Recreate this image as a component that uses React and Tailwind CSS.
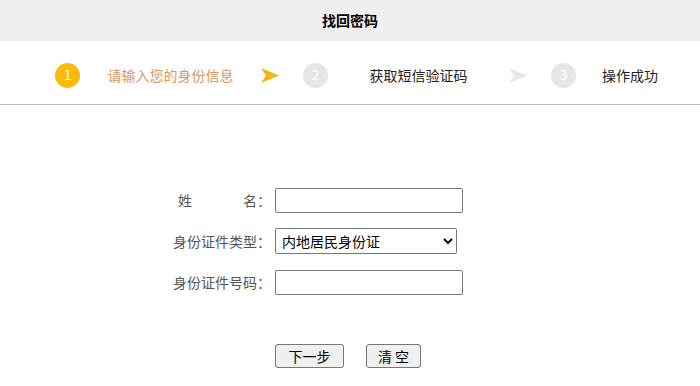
import React from 'react';

const font = { fontFamily: '"Noto Sans CJK SC", "Noto Sans", sans-serif' };

const Arrow = ({ color }) => (
    <svg width="18" height="15" viewBox="0 0 18 15" className="shrink-0">
        <path d="M0 0 L18 7.5 L0 15 L5 7.5 Z" fill={color} />
    </svg>
);

const steps = [
    { num: 1, label: '请输入您的身份信息', active: true },
    { num: 2, label: '获取短信验证码', active: false },
    { num: 3, label: '操作成功', active: false },
];

const Step = ({ step, last }) => (
    <div className="flex items-center">
        <div
            className={`w-[25px] h-[25px] rounded-full flex items-center justify-center text-white text-[13px] shrink-0 ${
                step.active ? 'bg-[#fbb90e]' : 'bg-[#e6e6e6]'
            }`}
        >
            {step.num}
        </div>
        <div
            className={`${last ? 'w-[108px]' : 'w-[181px]'} text-center text-[14px] ${
                step.active ? 'text-[#d9955c]' : 'text-[#222]'
            }`}
        >
            {step.label}
        </div>
        {!last && (
            <>
                <Arrow color={step.active ? '#f8b40c' : '#e6e6e6'} />
                <div className="w-[24px]" />
            </>
        )}
    </div>
);

export default function App() {
    return (
        <div className="w-[700px] h-[386px] bg-white overflow-hidden" style={font}>
            {/* Title bar */}
            <div className="h-[41px] bg-[#efefef] flex items-center justify-center">
                <span className="text-[14px] font-bold text-black">找回密码</span>
            </div>

            {/* Steps */}
            <div className="h-[64px] border-b border-[#bdbdbd] flex items-center pl-[55px] pt-[5px]">
                {steps.map((s, i) => (
                    <Step key={s.num} step={s} last={i === steps.length - 1} />
                ))}
            </div>

            {/* Form */}
            <div className="pt-[83px] text-[14px] text-[#555]">
                <div className="flex items-center h-[25px]">
                    <div className="w-[271px] flex justify-end items-center">
                        <span>姓</span>
                        <span className="inline-block w-[51px]" />
                        <span>名：</span>
                    </div>
                    <input className="ml-[4px] w-[188px] h-[25px] border border-[#767676] rounded-[2px] bg-white px-1 outline-none" />
                </div>
                <div className="flex items-center h-[26px] mt-[15px]">
                    <div className="w-[271px] text-right">身份证件类型：</div>
                    <select className="ml-[4px] w-[182px] h-[26px] border border-[#767676] rounded-[2px] bg-white text-black text-[14px] pl-[2px]">
                        <option>内地居民身份证</option>
                    </select>
                </div>
                <div className="flex items-center h-[25px] mt-[16px]">
                    <div className="w-[271px] text-right">身份证件号码：</div>
                    <input className="ml-[4px] w-[188px] h-[25px] border border-[#767676] rounded-[2px] bg-white px-1 outline-none" />
                </div>

                <div className="flex mt-[49px] pl-[275px] gap-[22px]">
                    <button className="w-[69px] h-[24px] border border-[#767676] rounded-[3px] bg-[#efefef] text-black text-[14px] flex items-center justify-center">
                        下一步
                    </button>
                    <button className="w-[55px] h-[24px] border border-[#767676] rounded-[3px] bg-[#efefef] text-black text-[14px] flex items-center justify-center">
                        清 空
                    </button>
                </div>
            </div>
        </div>
    );
}
